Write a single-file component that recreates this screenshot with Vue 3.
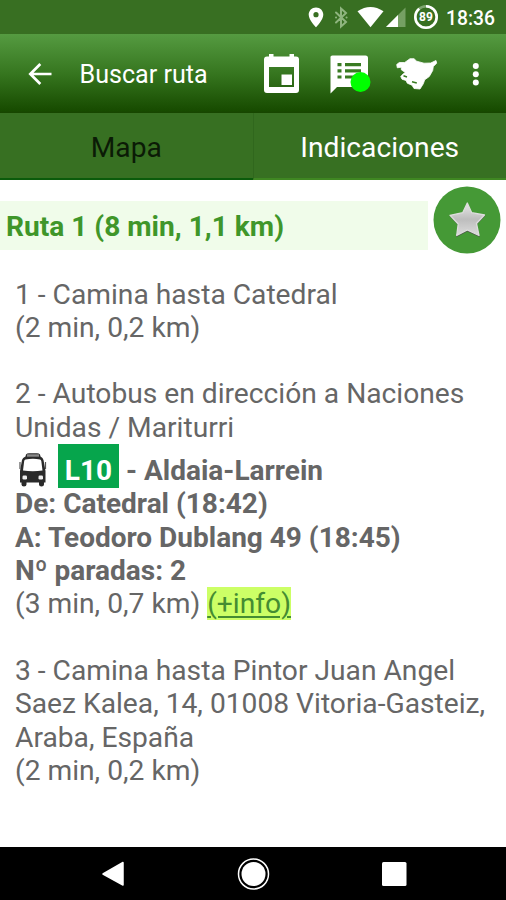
<script setup>
const firstStep = ['1 - Camina hasta Catedral', '(2 min, 0,2 km)']
const busIntro = ['2 - Autobus en dirección a Naciones', 'Unidas / Mariturri']
const busDetails = ['De: Catedral (18:42)', 'A: Teodoro Dublang 49 (18:45)', 'Nº paradas: 2']
const lastStep = [
  '3 - Camina hasta Pintor Juan Angel',
  'Saez Kalea, 14, 01008 Vitoria-Gasteiz,',
  'Araba, España',
  '(2 min, 0,2 km)',
]
</script>

<template>
  <div class="screen">
    <div class="status">
      <svg class="status-icons" width="140" height="34" viewBox="0 0 140 34">
        <path d="M16 7.500c-4.200 0-7.300 3.200-7.300 7.200 0 5.200 7.300 12.600 7.300 12.600s7.300-7.400 7.300-12.600c0-4-3.100-7.200-7.300-7.200zm0 4.600a2.600 2.600 0 1 1 0 5.200 2.600 2.600 0 0 1 0-5.200z" fill="#fff" />
        <path d="M36 12.500l10 9.500-5 4.500v-18l5 4.500-10 9.500M36 17.500h.1M46.500 17.500h.1" fill="none" stroke="#8fb57f" stroke-width="2" stroke-linecap="round" />
        <path d="M57.500 11.300Q70.500 2.700 83.500 11.300L70.500 27.200z" fill="#fff" />
        <path d="M105.500 7.500V27H86z" fill="#75a063" />
        <path d="M98 15V27H86z" fill="#fff" />
        <circle cx="126" cy="17" r="10.700" fill="none" stroke="#7fa66f" stroke-width="2.600" />
        <circle class="battery-ring" cx="126" cy="17" r="10.700" fill="none" stroke="#fff" stroke-width="2.600" pathLength="100" />
        <text class="battery-text" x="126" y="21.300" text-anchor="middle">89</text>
      </svg>
      <span class="clock">18:36</span>
    </div>

    <header class="toolbar">
      <svg class="back" width="24" height="24" viewBox="0 0 24 24">
        <path d="M23.500 12H3M12.300 2L2.300 12l10 10" fill="none" stroke="#fff" stroke-width="2.700" />
      </svg>
      <h1 class="title">Buscar ruta</h1>
      <svg class="actions" width="243" height="50" viewBox="0 0 243 50">
        <path fill-rule="evenodd" d="M5 7.500h2V5h4.500v2.500h16V5H32v2.500h2q3 0 3 3V41q0 3-3 3H5q-3 0-3-3V10.500q0-3 3-3zM7 18v20h25V18z" fill="#fff" />
        <path d="M19.500 25.500h10.500v10.500h-10.500z" fill="#fff" />
        <path d="M70.500 6.500h33q2.500 0 2.500 2.500v26.500q0 2.500-2.500 2.500H75l-6.500 6.500V9Q68 6.500 70.500 6.500z" fill="#fff" />
        <path d="M75.500 14h4v3.200h-4zm7.500 0h16v3.200H83zM75.500 20.200h4v3.200h-4zm7.500 0h16v3.200H83zM75.500 26.400h4v3.200h-4zm7.500 0h10v3.200H83z" fill="#397b22" />
        <circle cx="98.500" cy="33" r="10" fill="#0f0" />
        <path d="M134.700 15.500L137.300 13.500 142.700 13.500 148 9.700 152 9.700 154.700 12.200 162 14.200 168.700 14 174 11.500 174.700 14.200 171.300 17.500 170.700 21.500 167.300 27.500 162.700 30.800 161.300 34.800 158 40 152 39.500 150 36.200 145.300 34.200 144 31.500 140 30.200 138.700 27.500 141.300 24.800 143.300 23.500 139.300 20.800 139.300 18.200 135.300 18.800z" fill="#fff" stroke="#fff" stroke-width=".8" stroke-linejoin="round" />
        <path d="M141.500 26.800l3.500 1.200M150 32.800l4.800 1.200" stroke="#397b22" stroke-width="1.500" />
        <circle cx="213.800" cy="17" r="3" fill="#fff" />
        <circle cx="213.800" cy="25.300" r="3" fill="#fff" />
        <circle cx="213.800" cy="33.600" r="3" fill="#fff" />
      </svg>
    </header>

    <nav class="tabs">
      <div class="tab"><span>Mapa</span></div>
      <div class="tab active"><span>Indicaciones</span></div>
    </nav>

    <main class="content">
      <div class="route">
        <h2 class="route-title">Ruta 1 (8 min, 1,1 km)</h2>
        <svg class="favorite" width="68" height="68" viewBox="0 0 68 68">
          <defs>
            <linearGradient id="silver" x1="0" y1="0" x2="0" y2="1">
              <stop offset="0" stop-color="#e8e8e8" />
              <stop offset=".5" stop-color="#bdbdbd" />
              <stop offset="1" stop-color="#dcdcdc" />
            </linearGradient>
          </defs>
          <circle cx="34" cy="34" r="33.500" fill="#459936" />
          <path d="M34.300 18L38.900 27.700 52.500 29.500 43.900 38.500 46.800 51.300 34.300 45.500 23.200 51.300 25 39 16.500 30 29.700 27.700z" fill="#4c5948" />
          <path d="M34.300 17L38.700 26.700 51.500 29 43.500 37.500 46 49.500 34.300 44 23.700 49.500 25.200 38 17 29.300 29.700 26.700z" fill="url(#silver)" stroke="#ddd" stroke-width="1.300" stroke-linejoin="round" />
        </svg>
      </div>

      <section class="steps">
        <div class="step">
          <p v-for="line in firstStep" :key="line">{{ line }}</p>
        </div>
        <div class="step">
          <p v-for="line in busIntro" :key="line">{{ line }}</p>
          <div class="bus-line">
            <svg class="bus" width="30" height="35" viewBox="0 0 30 35">
              <path d="M8 1.500Q9 .300 11 .300h8q2 0 3 1.200l.5 2Q25 4.500 25.500 7l2 11v11.500h-1.500v2q0 2-2.500 2t-2.500-2v-2H8.500v2q0 2-2.500 2t-2.500-2v-2H2V18L4 7q.5-2.500 3.500-3.500z" fill="#2a2a2a" />
              <path d="M9 1.300h12v2.400H9z" fill="#8a8a8a" />
              <path d="M7.500 6.500q7.500-1.500 14.500 0 1 0 1.300 1.500l1.200 9.500q-9.700 1.500-19.500 0L6.200 8q.3-1.500 1.300-1.500z" fill="#fff" />
              <path d="M2 9v7M27.500 9v7" stroke="#555" stroke-width="1.200" />
              <rect x="4.500" y="22.500" width="4.500" height="4" rx="1.200" fill="#eee" />
              <rect x="20.500" y="22.500" width="4.500" height="4" rx="1.200" fill="#eee" />
            </svg>
            <span class="badge">L10</span>
            <span>- Aldaia-Larrein</span>
          </div>
          <p v-for="line in busDetails" :key="line" class="strong">{{ line }}</p>
          <p>(3 min, 0,7 km) <a class="info">(+info)</a></p>
        </div>
        <div class="step">
          <p v-for="line in lastStep" :key="line">{{ line }}</p>
        </div>
      </section>
    </main>

    <footer class="navbar">
      <svg width="506" height="53" viewBox="0 0 506 53">
        <path d="M103 27L123 15.500V38z" fill="#fff" stroke="#fff" stroke-width="1.500" stroke-linejoin="round" />
        <circle cx="253.500" cy="27" r="15" fill="none" stroke="#fff" stroke-width="1.500" />
        <circle cx="253.500" cy="27" r="12" fill="#fff" />
        <rect x="382" y="15" width="24.500" height="24" rx="1.500" fill="#fff" />
      </svg>
    </footer>
  </div>
</template>

<style>
body { background: #fff; }
</style>

<style scoped>
.screen {
  width: 506px;
  height: 900px;
  overflow: hidden;
  display: flex;
  flex-direction: column;
  background: #fff;
  font-family: Roboto, "Liberation Sans", sans-serif;
  color: #666;
}
.status {
  flex: none;
  height: 34px;
  display: flex;
  align-items: center;
  padding-left: 300px;
  background: #386f22;
}
.battery-ring { stroke-dasharray: 89 100; transform: rotate(-90deg); transform-origin: 126px 17px; }
.battery-text { font-size: 12px; font-weight: 700; fill: #fff; }
.clock { margin-left: 6px; font-size: 19.3px; font-weight: 500; line-height: 34px; padding-top: 3px; color: #fff; }
.toolbar {
  flex: none;
  height: 79px;
  display: flex;
  align-items: center;
  padding-left: 28px;
  background: linear-gradient(#559b41 0%, #36761f 50%, #174b00 97%, #174500 100%);
}
.back { flex: none; }
.title { margin: 3px 0 0 27.5px; width: 180.5px; font-size: 25.1px; font-weight: 400; line-height: 32px; color: #fff; white-space: nowrap; }
.actions { flex: none; margin-left: 2px; }
.tabs { flex: none; height: 67px; display: flex; background: #377022; }
.tab {
  flex: 1;
  display: flex;
  align-items: center;
  justify-content: center;
  border-bottom: 2px solid #0b5b0b;
  font-size: 28.2px;
  color: #0b1b06;
  padding-top: 4px;
}
.tab.active { color: #fff; border-left: 1px solid #30671d; border-bottom-color: #3f8722; }
.content { flex: 1; }
.route { display: flex; height: 70px; margin-top: 6px; justify-content: space-between; padding-right: 5px; }
.route-title {
  margin: 15px 0 0;
  width: 422px;
  height: 49px;
  padding-left: 6px;
  background: #f0fcea;
  font-size: 28.1px;
  line-height: 51px;
  font-weight: 700;
  color: #3f962a;
  white-space: nowrap;
}
.favorite { flex: none; }
.steps { padding: 21.5px 0 0 15px; font-size: 28.2px; line-height: 33.3px; }
.step { margin-bottom: 33.3px; }
.step p { margin: 0; white-space: nowrap; }
.step .strong, .bus-line { font-weight: 700; font-size: 28px; }
.bus-line { display: flex; height: 43.5px; line-height: 54px; white-space: nowrap; }
.bus { margin: 9px 10px 0 3px; flex: none; }
.badge { width: 61px; height: 44px; text-align: center; background: #06a54c; color: #fff; margin-right: 7px; }
.info { background: #ccff66; color: #448c32; text-decoration: underline; text-decoration-thickness: 1.5px; text-underline-offset: 3px; }
.navbar { flex: none; height: 53px; background: #000; }
.navbar svg { display: block; }
</style>
